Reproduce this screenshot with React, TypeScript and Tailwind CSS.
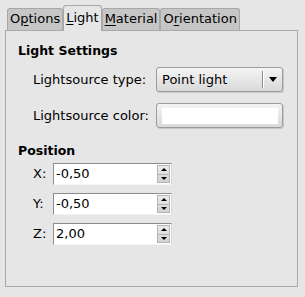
const font = "font-['DejaVu_Sans',sans-serif]";

function Tab({ label, mn, active }: { label: string; mn: number; active?: boolean }) {
  const parts = [label.slice(0, mn), label[mn], label.slice(mn + 1)];
  return (
    <div
      className={
        active
          ? "relative z-10 -mb-px flex h-[26px] items-start rounded-t-[3px] border border-b-0 border-[#a8a8a8] bg-[#e6e6e6] px-[2px] pt-[2px]"
          : "flex h-[22px] items-start rounded-t-[3px] border border-b-0 border-[#a8a8a8] bg-[#c6c6c6] px-[2px] pt-0"
      }
    >
      <span className="text-[13px] leading-[19px] text-black">
        {parts[0]}
        <span className="underline underline-offset-2">{parts[1]}</span>
        {parts[2]}
      </span>
    </div>
  );
}

function Spin({ label, value }: { label: string; value: string }) {
  return (
    <div className="flex h-[22px] items-center">
      <span className="w-[20px] text-[13px] text-black">{label}</span>
      <div className="flex h-[22px] w-[119px] border border-t-[#8c8c8c] border-l-[#8c8c8c] border-r-[#d8d8d8] border-b-[#f4f4f4] bg-white">
        <div className="flex flex-1 items-center pl-[2px] text-[13px] text-black">{value}</div>
        <div className="my-px mr-px flex w-[13px] flex-col border border-[#b4b4b4] bg-gradient-to-b from-[#ececec] to-[#d2d2d2]">
          <div className="flex flex-1 items-center justify-center border-b border-[#b4b4b4]">
            <div className="h-0 w-0 border-x-[3px] border-b-[3px] border-x-transparent border-b-black" />
          </div>
          <div className="flex flex-1 items-center justify-center">
            <div className="h-0 w-0 border-x-[3px] border-t-[3px] border-x-transparent border-t-black" />
          </div>
        </div>
      </div>
    </div>
  );
}

export default function App() {
  return (
    <div className={`h-[297px] w-[305px] bg-[#e6e6e6] pl-[5px] pt-[5px] ${font}`}>
      <div className="flex items-end pl-[2px]">
        <Tab label="Options" mn={1} />
        <Tab label="Light" mn={0} active />
        <Tab label="Material" mn={0} />
        <Tab label="Orientation" mn={1} />
      </div>
      <div className="h-[257px] w-[293px] border border-[#a8a8a8] pl-[12px] pt-[12px]">
        <div className="text-[12.5px] font-bold leading-[16px] text-black">Light Settings</div>
        <div className="ml-[15px] mt-[8px] flex h-[25px] items-center">
          <span className="w-[123px] text-[13px] text-black">Lightsource type:</span>
          <div className="flex h-[25px] w-[127px] items-center rounded-[3px] border border-[#9c9c9c] bg-gradient-to-b from-[#f4f4f4] to-[#d9d9d9] shadow-[1px_1px_0_#c8c8c8]">
            <span className="flex-1 pl-[5px] text-[13px] text-black">Point light</span>
            <div className="h-[17px] w-px bg-[#8c8c8c] shadow-[1px_0_0_#ffffff]" />
            <div className="flex w-[19px] justify-center">
              <div className="h-0 w-0 border-x-[4px] border-t-[5px] border-x-transparent border-t-black" />
            </div>
          </div>
        </div>
        <div className="ml-[15px] mt-[11px] flex h-[25px] items-center">
          <span className="w-[123px] text-[13px] text-black">Lightsource color:</span>
          <div className="flex h-[25px] w-[127px] items-center justify-center rounded-[3px] border border-[#9c9c9c] bg-gradient-to-b from-[#f4f4f4] to-[#d9d9d9] shadow-[1px_1px_0_#c8c8c8]">
            <div className="h-[16px] w-[116px] bg-white" />
          </div>
        </div>
        <div className="mt-[15px] text-[12.5px] font-bold leading-[16px] text-black">Position</div>
        <div className="ml-[15px] mt-[4px] flex flex-col gap-[8px]">
          <Spin label="X:" value="-0,50" />
          <Spin label="Y:" value="-0,50" />
          <Spin label="Z:" value="2,00" />
        </div>
      </div>
    </div>
  );
}
